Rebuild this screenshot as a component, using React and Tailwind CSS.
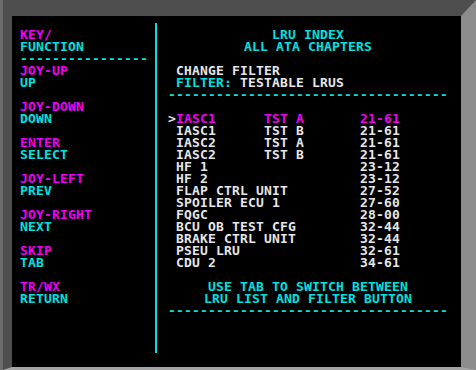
const KEYS = [
  ['JOY-UP', 'UP'],
  ['JOY-DOWN', 'DOWN'],
  ['ENTER', 'SELECT'],
  ['JOY-LEFT', 'PREV'],
  ['JOY-RIGHT', 'NEXT'],
  ['SKIP', 'TAB'],
  ['TR/WX', 'RETURN'],
];

const LRUS = [
  { name: 'IASC1', test: 'TST A', ata: '21-61' },
  { name: 'IASC1', test: 'TST B', ata: '21-61' },
  { name: 'IASC2', test: 'TST A', ata: '21-61' },
  { name: 'IASC2', test: 'TST B', ata: '21-61' },
  { name: 'HF 1', test: '', ata: '23-12' },
  { name: 'HF 2', test: '', ata: '23-12' },
  { name: 'FLAP CTRL UNIT', test: '', ata: '27-52' },
  { name: 'SPOILER ECU 1', test: '', ata: '27-60' },
  { name: 'FQGC', test: '', ata: '28-00' },
  { name: 'BCU OB TEST CFG', test: '', ata: '32-44' },
  { name: 'BRAKE CTRL UNIT', test: '', ata: '32-44' },
  { name: 'PSEU LRU', test: '', ata: '32-61' },
  { name: 'CDU 2', test: '', ata: '34-61' },
];

const pad = (s, n) => s + ' '.repeat(Math.max(0, n - s.length));

export default function App() {
  const selected = 0;

  return (
    <div className="w-[476px] h-[370px] bg-[#505050] border-l-[3px] border-[#6c6c6c] overflow-hidden">
      <div
        className="h-full border-t-[16px] border-l-[9px] border-r-[15px] border-b-[3px] border-t-[#4e4e4e] border-l-[#4e4e4e] border-r-[#8c8c8c] border-b-[#a4a4a4] bg-black flex text-[13px] leading-[12px] font-bold tracking-[0.17px] whitespace-pre"
        style={{ fontFamily: '"DejaVu Sans Mono", "Liberation Mono", monospace' }}
      >
        {/* Key / function legend */}
        <div className="w-[143px] shrink-0 pl-[8px] pt-[13px] flex flex-col">
          <div className="text-[#f000f0]">KEY/</div>
          <div className="text-[#00e0e0]">FUNCTION</div>
          <div className="text-[#00e0e0]">{'-'.repeat(16)}</div>
          <div className="flex flex-col gap-y-[12px]">
            {KEYS.map(([key, fn]) => (
              <div key={key}>
                <div className="text-[#f000f0]">{key}</div>
                <div className="text-[#00e0e0]">{fn}</div>
              </div>
            ))}
          </div>
        </div>

        <div className="w-[2px] bg-[#00e0e0] mt-[7px] mb-[14px] shrink-0" />

        {/* LRU index */}
        <div className="pl-[11px] pt-[13px] flex flex-col w-[300px]">
          <div className="w-[280px] text-center text-[#00e0e0]">
            <div>LRU INDEX</div>
            <div>ALL ATA CHAPTERS</div>
          </div>
          <div className="h-[12px]" />
          <div className="text-[#e6e6e6]"> CHANGE FILTER</div>
          <div>
            <span className="text-[#00e0e0]"> FILTER: </span>
            <span className="text-[#e6e6e6]">TESTABLE LRUS</span>
          </div>
          <div className="text-[#00e0e0]">{'-'.repeat(35)}</div>
          <div className="h-[12px]" />
          {LRUS.map((lru, i) => (
            <div key={i}>
              <span className="text-[#e6e6e6]">{i === selected ? '>' : ' '}</span>
              <span className={i === selected ? 'text-[#f000f0]' : 'text-[#e6e6e6]'}>
                {pad(pad(lru.name, 11) + lru.test, 23) + lru.ata}
              </span>
            </div>
          ))}
          <div className="h-[12px]" />
          <div className="w-[280px] text-center text-[#00e0e0]">
            <div>USE TAB TO SWITCH BETWEEN</div>
            <div>LRU LIST AND FILTER BUTTON</div>
          </div>
          <div className="text-[#00e0e0]">{'-'.repeat(35)}</div>
        </div>
      </div>
    </div>
  );
}
